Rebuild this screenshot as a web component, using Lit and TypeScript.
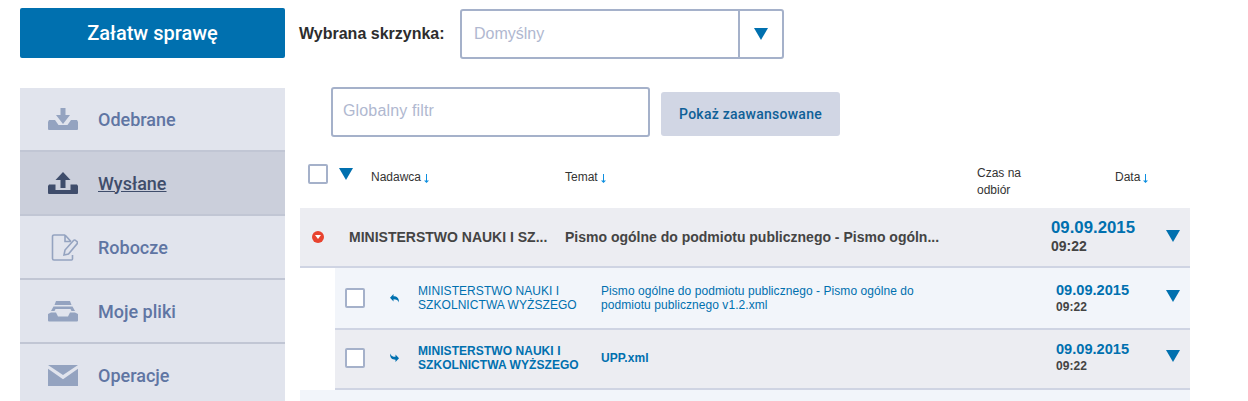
import { LitElement, html, css, svg } from "lit";
import { customElement } from "lit/decorators.js";

const tri = (w: number, h: number) => html`<svg class="tri" width=${w} height=${h} viewBox="0 0 14 12"><path d="M0 0H14L7 12Z" fill="#0070af"/></svg>`;
const icons: Record<string, any> = {
  down: svg`<path d="M12.500 0h5v7H22l-7 9-7-9h4.500z"/><path d="M0 14l1-2h6l3.500 5h9L23 12h6l1 2v7a1 1 0 0 1-1 1H1a1 1 0 0 1-1-1z"/>`,
  up: svg`<path d="M15 0l7.500 8H17.500v8h-5V8H7.500z"/><path d="M0 14l1-1.500h6.500V18h15v-5.500H29l1 1.500v7a1 1 0 0 1-1 1H1a1 1 0 0 1-1-1z"/>`,
  draft: svg`<path d="M17 1H6a1.500 1.500 0 0 0-1.500 1.500v22A1.500 1.500 0 0 0 6 26h17.500a1 1 0 0 0 1-1v-4M17 1l6 6.500M17 1v6.500h6" fill="none" stroke="currentColor" stroke-width="1.600"/><path d="M16 21l1-5 8.500-9.500a1.500 1.500 0 0 1 2.200 0l1.300 1.200a1.500 1.500 0 0 1 0 2.200L20.500 20z" fill="none" stroke="currentColor" stroke-width="1.600"/>`,
  files: svg`<path d="M8 0h14l1.500 4h-17zM5.500 5.500h19L27 10h-3.500l-1-2h-15l-1 2H3zM0 13l3-1.500h5l2 4h10l2-4h5l3 1.500v6.500a1 1 0 0 1-1 1H1a1 1 0 0 1-1-1z"/>`,
  mail: svg`<path d="M0 0h30L15 10zM0 3.700l15 10.600 15-10.600V21H0z"/>`,
};

@customElement("app-root")
export class AppRoot extends LitElement {
  static styles = css`
    :host { display: block; width: 1248px; height: 401px; overflow: hidden; font-family: "Liberation Sans", Arial, sans-serif; background: #fff; color: #333; }
    .page { display: flex; align-items: flex-start; }
    .side { width: 265px; margin: 8px 0 0 20px; flex: none; }
    .cta { height: 50px; background: #0070af; color: #fff; border-radius: 2px; font: 500 20px Roboto, sans-serif; display: flex; align-items: center; justify-content: center; }
    .nav { margin-top: 30px; }
    .item { height: 62px; border-bottom: 2px solid #c1c6d4; background: #e1e4ed; display: flex; align-items: center; padding-left: 28px; gap: 20px; font: 500 18px Roboto, sans-serif; color: #5f75a3; }
    .item svg { width: 30px; flex: none; fill: #94a3c0; color: #94a3c0; }
    .item.on { background: #cbcfdb; color: #3f4d6b; }
    .item.on svg { fill: #3f4d6b; }
    .item.on span { text-decoration: underline; }
    .main { flex: 1; padding-top: 9px; }
    .top { display: flex; align-items: center; padding-left: 14px; }
    .top label { font: 700 16px "Liberation Sans", sans-serif; width: 161px; color: #2d2d2d; }
    .select { width: 324px; height: 50px; box-sizing: border-box; border: 2px solid #a5b1ca; border-radius: 3px; display: flex; }
    .select .val { flex: 1; padding-left: 12px; display: flex; align-items: center; font-size: 16px; color: #b0b8d0; }
    .select .btn { width: 42px; border-left: 2px solid #a5b1ca; display: flex; align-items: center; justify-content: center; }
    .filters { display: flex; align-items: center; margin: 28px 0 0 46px; gap: 11px; }
    .input { width: 319px; height: 50px; box-sizing: border-box; border: 2px solid #a5b1ca; border-radius: 3px; padding: 0 10px 3px; display: flex; align-items: center; font-size: 16px; letter-spacing: .15px; color: #b0b8d0; }
    .adv { width: 179px; height: 44px; margin-top: 4px; border-radius: 3px; background: #d1d6e4; color: #0f6097; display: flex; align-items: center; justify-content: center; font: 500 14px Roboto, sans-serif; letter-spacing: .25px; }
    .head { display: grid; grid-template-columns: 31px 32px 194px 412px 138px 1fr; height: 71px; margin-left: 15px; padding-left: 8px; font-size: 12px; align-items: start; width: 882px; box-sizing: content-box; }
    .head { width: 882px; }
    .box { width: 20px; height: 20px; box-sizing: border-box; border: 2px solid #a5b1ca; border-radius: 2px; background: #fff; display: block; }
    .head .box { margin-top: 27px; }
    .head .tri { margin-top: 31px; display: block; }
    .head .t { margin-top: 33px; line-height: 14px; display: flex; align-items: center; gap: 3px; }
    .head .cz { line-height: 17px; margin-top: 28px; }
    .arr { fill: #0d8fe0; display: block; margin-top: 2px; }
    .list { width: 890px; margin-left: 15px; }
    .row { display: grid; align-items: center; box-sizing: border-box; }
    .row > .tri { justify-self: start; display: block; }
    .row.p { height: 60px; border-bottom: 2px solid #cfd4e3; background: #ecedf2; grid-template-columns: 49px 216px 486px 115px 1fr; font-size: 14px; font-weight: 700; color: #444; }
    .row.p .cell { white-space: nowrap; overflow: hidden; }
    .row.p > .tri { margin-top: -2px; }
    .badge { width: 12px; height: 12px; border-radius: 50%; background: #e8432f; margin-left: 12px; display: flex; align-items: center; justify-content: center; }
    .badge i { border: 3.500px solid transparent; border-top: 4px solid #fff; border-bottom: 0; }
    .date { color: #0070af; font-weight: 700; }
    .time { color: #444; font-weight: 700; }
    .row.p .date { font-size: 16.800px; line-height: 18px; }
    .row.p .time { font-size: 14px; line-height: 18px; }
    .sub { margin-left: 35px; }
    .row.s { border-bottom: 2px solid #cfd4e3; grid-template-columns: 45px 28px 183px 455px 110px 1fr; padding-left: 10px; font-size: 12px; line-height: 14px; letter-spacing: .06px; color: #0070af; }
    .row.s.a { height: 62px; background: #f2f5fa; }
    .row.s.a > .tri { margin-top: -4px; }
    .row.s.b { height: 60px; padding-bottom: 3px; background: #ecedf2; font-weight: 700; }
    .row.s.b > .tri { margin-top: -3px; }
    .row.s .date { font-size: 14.600px; line-height: 17px; letter-spacing: 0; }
    .row.s .time { font-size: 12px; line-height: 16px; }
    .rest { height: 40px; background: #f2f5fa; }
    .fw { display: block; }
  `;
  render() {
    const nav = [["down", "Odebrane", 22], ["up", "Wysłane", 22], ["draft", "Robocze", 27], ["files", "Moje pliki", 21], ["mail", "Operacje", 21]];
    const arrow = html`<svg class="arr" width="5" height="9" viewBox="0 0 5 9"><path d="M2 0h1v6.500h2L2.500 9 0 6.500h2z"/></svg>`;
    const stamp = html`<div><div class="date">09.09.2015</div><div class="time">09:22</div></div>`;
    return html`<div class="page">
      <div class="side">
        <div class="cta">Załatw sprawę</div>
        <div class="nav">${nav.map(([i, t, h], n) => html`<div class="item ${n === 1 ? "on" : ""}"><svg height=${h} viewBox="0 0 30 ${h}">${icons[i as string]}</svg><span>${t}</span></div>`)}</div>
      </div>
      <div class="main">
        <div class="top"><label>Wybrana skrzynka:</label>
          <div class="select"><div class="val">Domyślny</div><div class="btn">${tri(14, 12)}</div></div></div>
        <div class="filters"><div class="input">Globalny filtr</div><div class="adv">Pokaż zaawansowane</div></div>
        <div class="head">
          <span class="box"></span>${tri(14, 12)}
          <span class="t">Nadawca ${arrow}</span><span class="t">Temat ${arrow}</span>
          <span class="cz">Czas na<br>odbiór</span><span class="t">Data ${arrow}</span>
        </div>
        <div class="list">
          <div class="row p">
            <div class="badge"><i></i></div>
            <div class="cell">MINISTERSTWO NAUKI I SZ...</div>
            <div class="cell">Pismo ogólne do podmiotu publicznego - Pismo ogóln...</div>
            ${stamp}${tri(14, 12)}
          </div>
          <div class="sub">
            <div class="row s a"><span class="box"></span>
              <svg width="9" height="9" viewBox="0 0 9 9" class="fw"><path d="M3.500 0v2.300C7 2.300 9 4 9 8.500 8 6 6.500 5.200 3.500 5.200V7.500L0 3.700z" fill="#0070af"/></svg>
              <div>MINISTERSTWO NAUKI I<br>SZKOLNICTWA WYŻSZEGO</div>
              <div>Pismo ogólne do podmiotu publicznego - Pismo ogólne do<br>podmiotu publicznego v1.2.xml</div>
              ${stamp}${tri(14, 12)}
            </div>
            <div class="row s b"><span class="box"></span>
              <svg width="9" height="9" viewBox="0 0 9 9" class="fw"><path d="M5.500 9V6.700C2 6.700 0 5 0 .5 1 3 2.500 3.800 5.500 3.800V1.500L9 5.300z" fill="#0070af"/></svg>
              <div>MINISTERSTWO NAUKI I<br>SZKOLNICTWA WYŻSZEGO</div>
              <div>UPP.xml</div>
              ${stamp}${tri(14, 12)}
            </div>
          </div>
          <div class="rest"></div>
        </div>
      </div>
    </div>`;
  }
}
